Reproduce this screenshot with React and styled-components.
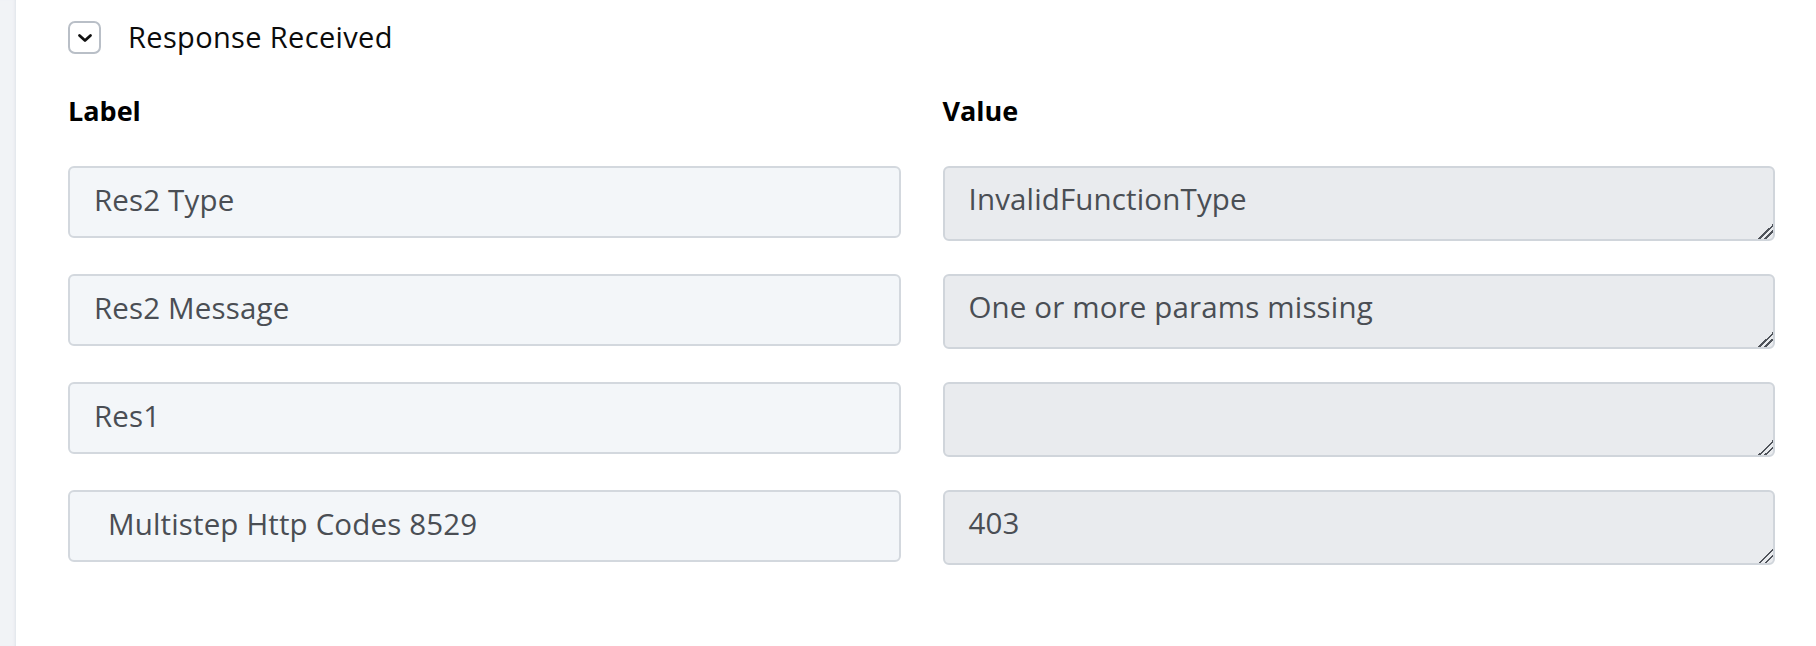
import React from "react";
import styled, { createGlobalStyle } from "styled-components";

const GlobalStyle = createGlobalStyle`
  html, body {
    margin: 0;
    padding: 0;
    background: #ffffff;
  }
  body {
    font-family: "Open Sans", "Noto Sans", sans-serif;
    -webkit-font-smoothing: antialiased;
  }
`;

const Page = styled.div`
  display: flex;
  min-height: 646px;
`;

const SideRail = styled.div`
  flex: 0 0 16px;
  background: #f1f3f6;
  box-shadow: inset -3px 0 3px -2px #dfe3e9;
`;

const Content = styled.section`
  flex: 1;
  padding: 21px 41px 0 52px;
`;

const SectionHeader = styled.div`
  display: flex;
  align-items: center;
  gap: 27px;
  height: 33px;
`;

const ToggleButton = styled.button`
  box-sizing: border-box;
  width: 33px;
  height: 33px;
  padding: 0;
  display: flex;
  align-items: center;
  justify-content: center;
  background: #ffffff;
  border: 2px solid #b9bfc7;
  border-radius: 7px;
  color: #111;
  cursor: pointer;
`;

const SectionTitle = styled.h2`
  margin: 0 0 2px;
  font-size: 29px;
  font-weight: 500;
  letter-spacing: 0.35px;
  color: #0b0b0b;
`;

const FieldGrid = styled.div`
  display: grid;
  grid-template-columns: 1fr 1fr;
  column-gap: 42px;
  row-gap: 33px;
  margin-top: 41px;
  align-items: start;
`;

const ColumnHeading = styled.div`
  font-size: 27px;
  font-weight: 700;
  color: #000;
  line-height: 32px;
  margin-bottom: 6px;
`;

const LabelInput = styled.input`
  box-sizing: border-box;
  width: 100%;
  height: 72px;
  padding: 0 0 5px ${(p) => (p.$indent ? 38 : 24)}px;
  background: #f3f6f9;
  border: 2px solid #d3d8de;
  border-radius: 6px;
  font-family: "Open Sans", "Noto Sans", sans-serif;
  font-size: 29.5px;
  letter-spacing: 0.15px;
  color: #4a4e54;
  outline: none;
`;

const ValueArea = styled.textarea`
  box-sizing: border-box;
  width: 100%;
  height: 75px;
  padding: 12px 24px 0;
  background: #e9ebee;
  border: 2px solid #d0d5db;
  border-radius: 6px;
  font-family: "Open Sans", "Noto Sans", sans-serif;
  font-size: 29.5px;
  letter-spacing: 0.15px;
  line-height: 38px;
  color: #4a4e54;
  outline: none;
  resize: vertical;
  overflow: hidden;

  &::-webkit-resizer {
    background: linear-gradient(
      135deg,
      transparent 0 50%,
      #4f535a 50% 58%,
      transparent 58% 70%,
      #4f535a 70% 78%,
      transparent 78%
    );
  }
`;

const fields = [
  { label: "Res2 Type", value: "InvalidFunctionType" },
  { label: "Res2 Message", value: "One or more params missing" },
  { label: "Res1", value: "" },
  { label: "Multistep Http Codes 8529", value: "403", indent: true },
];

function Chevron() {
  return (
    <svg width="16" height="10" viewBox="0 0 16 10" fill="none">
      <path
        d="M2.5 2.5l5.5 5 5.5-5"
        stroke="currentColor"
        strokeWidth="2.8"
        strokeLinecap="round"
        strokeLinejoin="round"
      />
    </svg>
  );
}

export default function App() {
  return (
    <>
      <GlobalStyle />
      <Page>
        <SideRail />
        <Content>
          <SectionHeader>
            <ToggleButton aria-label="Collapse">
              <Chevron />
            </ToggleButton>
            <SectionTitle>Response Received</SectionTitle>
          </SectionHeader>
          <FieldGrid>
            <ColumnHeading>Label</ColumnHeading>
            <ColumnHeading>Value</ColumnHeading>
            {fields.map((f) => (
              <React.Fragment key={f.label}>
                <LabelInput readOnly value={f.label} $indent={f.indent} />
                <ValueArea readOnly value={f.value} />
              </React.Fragment>
            ))}
          </FieldGrid>
        </Content>
      </Page>
    </>
  );
}
